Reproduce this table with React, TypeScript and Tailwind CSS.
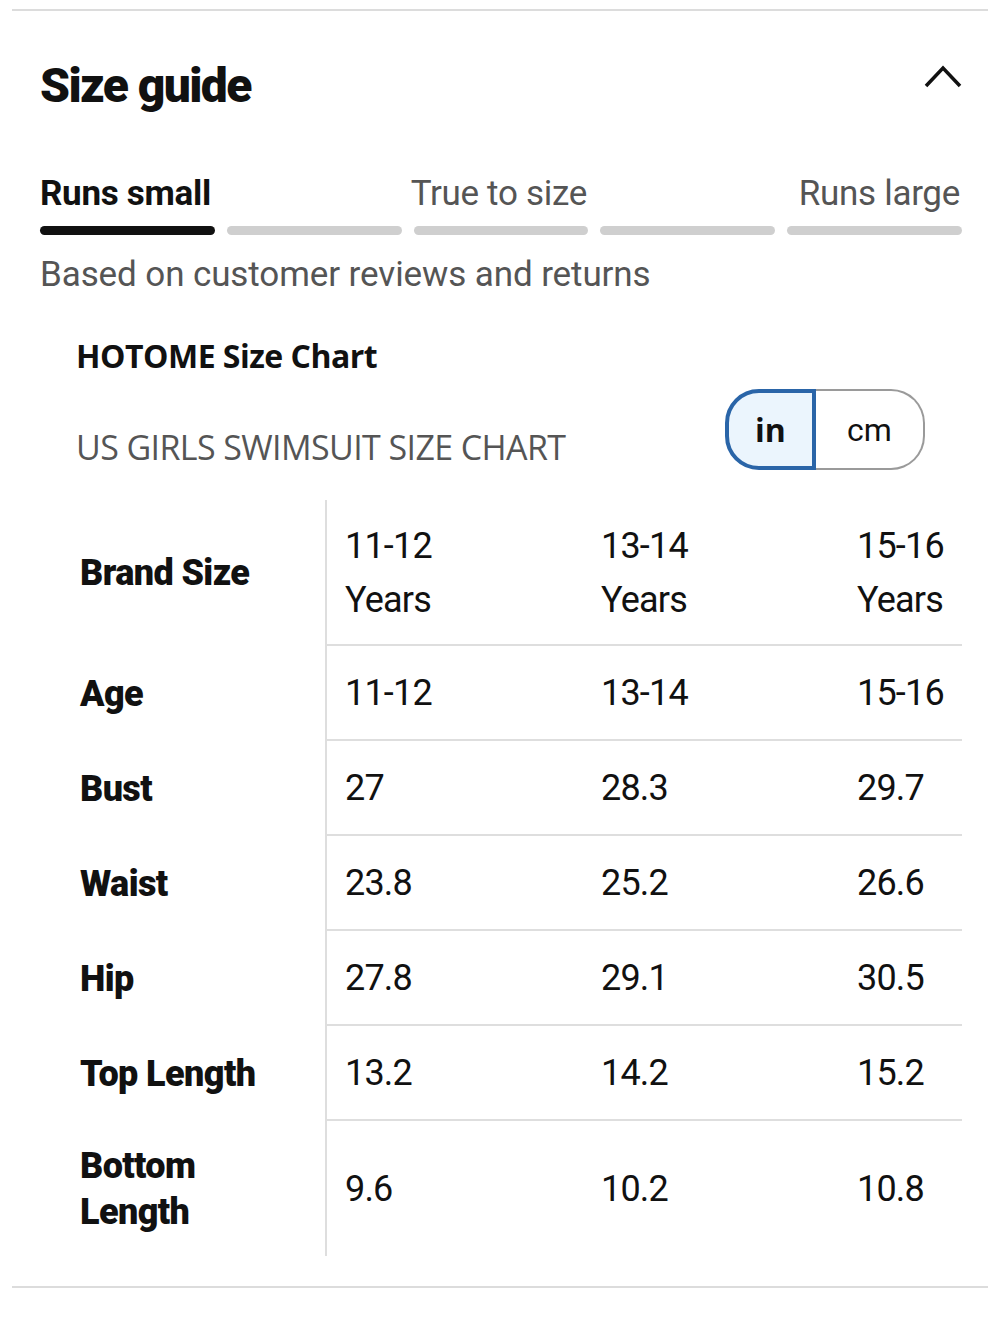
import React from "react";

const rows = [
  { label: "Age", values: ["11-12", "13-14", "15-16"] },
  { label: "Bust", values: ["27", "28.3", "29.7"] },
  { label: "Waist", values: ["23.8", "25.2", "26.6"] },
  { label: "Hip", values: ["27.8", "29.1", "30.5"] },
  { label: "Top Length", values: ["13.2", "14.2", "15.2"] },
];

export default function App() {
  return (
    <div className="w-[1000px] h-[1333px] bg-white font-['Roboto',sans-serif] text-[#111]">
      <div className="pt-[9px] px-[12px]">
        <div className="h-[2px] bg-[#dcdcdc]" />
      </div>

      {/* header */}
      <div className="flex items-center justify-between pl-[40px] pr-[38px] pt-[48px]">
        <h1 className="text-[48px] leading-[54px] font-black tracking-[-1.6px]">Size guide</h1>
        <svg width="38" height="24" viewBox="0 0 38 24" className="mt-[-20px]">
          <path d="M2 22 L19 4 L36 22" fill="none" stroke="#111" strokeWidth="3.5" />
        </svg>
      </div>

      {/* fit scale */}
      <div className="px-[40px] mr-[-2px] pt-[62px]">
        <div className="flex justify-between text-[35px] leading-[38px] tracking-[-0.3px]">
          <span className="font-bold">Runs small</span>
          <span className="text-[#555] pr-[12px]">True to size</span>
          <span className="text-[#555] pr-[2px]">Runs large</span>
        </div>
        <div className="flex gap-[12px] mt-[13px]">
          <div className="flex-1 h-[9px] rounded-full bg-[#111]" />
          <div className="flex-1 h-[9px] rounded-full bg-[#cfcfcf]" />
          <div className="flex-1 h-[9px] rounded-full bg-[#cfcfcf]" />
          <div className="flex-1 h-[9px] rounded-full bg-[#cfcfcf]" />
          <div className="flex-1 h-[9px] rounded-full bg-[#cfcfcf]" />
        </div>
        <p className="mt-[20px] text-[35px] leading-[40px] text-[#555] tracking-[-0.1px]">
          Based on customer reviews and returns
        </p>
      </div>

      {/* chart */}
      <div className="pl-[76px] pr-[38px] pt-[40px] font-['Open_Sans',sans-serif]">
        <h2 className="text-[32px] leading-[42px] font-bold tracking-[-0.5px]">HOTOME Size Chart</h2>
        <div className="flex items-end justify-between mt-[12px]">
          <p className="text-[34px] leading-[42px] text-[#555] tracking-[-0.6px] pb-[2px]">US GIRLS SWIMSUIT SIZE CHART</p>
          <div className="flex h-[81px] mr-[37px]">
            <div className="w-[91px] flex items-center justify-center rounded-l-[34px] border-4 border-[#2a65a8] bg-[#ebf5fd] text-[32px] font-bold">
              in
            </div>
            <div className="w-[109px] flex items-center justify-center rounded-r-[34px] border-2 border-l-0 border-[#9a9a9a] text-[32px] font-['Roboto',sans-serif]">
              cm
            </div>
          </div>
        </div>

        <div className="mt-[30px] font-['Roboto',sans-serif]">
          <div className="flex">
            <div className="w-[249px] pl-[4px] flex items-center text-[36px] font-black tracking-[-0.6px]">Brand Size</div>
            <div className="flex-1 border-l-2 border-b-2 border-[#dedede] pl-[18px] pt-[19px] pb-[17px] grid grid-cols-[256px_256px_1fr] text-[36px] leading-[54px] tracking-[-0.8px]">
              {["11-12", "13-14", "15-16"].map((v) => (
                <div key={v}>
                  {v}
                  <br />
                  Years
                </div>
              ))}
            </div>
          </div>
          {rows.map((r) => (
            <div key={r.label} className="flex">
              <div className="w-[249px] pl-[4px] flex items-center text-[36px] font-black tracking-[-0.6px]">{r.label}</div>
              <div className="flex-1 h-[95px] border-l-2 border-b-2 border-[#dedede] pl-[18px] grid grid-cols-[256px_256px_1fr] items-center text-[36px] tracking-[-0.8px]">
                {r.values.map((v, i) => (
                  <div key={i}>{v}</div>
                ))}
              </div>
            </div>
          ))}
          <div className="flex">
            <div className="w-[249px] pl-[4px] flex items-center text-[36px] leading-[46px] font-black tracking-[-0.6px]">
              Bottom
              <br />
              Length
            </div>
            <div className="flex-1 h-[135px] border-l-2 border-[#dedede] pl-[18px] grid grid-cols-[256px_256px_1fr] items-center text-[36px] tracking-[-0.8px]">
              <div>9.6</div>
              <div>10.2</div>
              <div>10.8</div>
            </div>
          </div>
        </div>
      </div>

      <div className="pt-[30px] px-[12px]">
        <div className="h-[2px] bg-[#dcdcdc]" />
      </div>
    </div>
  );
}
